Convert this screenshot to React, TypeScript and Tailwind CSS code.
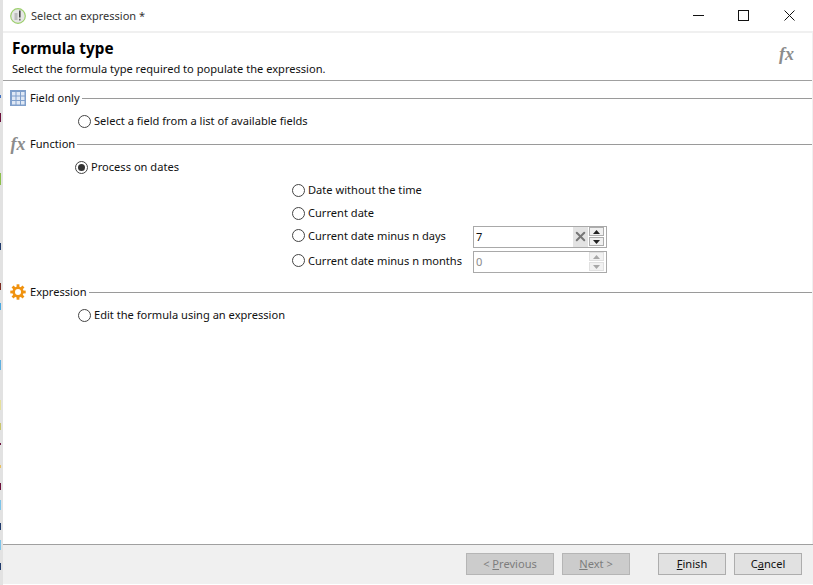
import { X } from "lucide-react";

const font = "font-['Noto_Sans',sans-serif]";

// bits of the windows behind the dialog, showing through at its left edge
const bleed = [
  { top: 95, height: 3, color: "#3f6fc0" },
  { top: 113, height: 9, color: "#6b0f3a" },
  { top: 173, height: 12, color: "#8cbf4a" },
  { top: 243, height: 7, color: "#1f3a6b" },
  { top: 283, height: 7, color: "#7a2a20" },
  { top: 303, height: 7, color: "#4aa8e0" },
  { top: 360, height: 10, color: "#5fb0e0" },
  { top: 400, height: 10, color: "#e6e09a" },
  { top: 423, height: 7, color: "#c9c46a" },
  { top: 443, height: 2, color: "#6b0f3a" },
  { top: 465, height: 3, color: "#e8c060" },
  { top: 483, height: 7, color: "#6b0f3a" },
  { top: 500, height: 10, color: "#7cc4ea" },
  { top: 523, height: 7, color: "#1f3a6b" },
  { top: 540, height: 10, color: "#7cc4ea" },
  { top: 563, height: 7, color: "#1f3a6b" },
];

function Radio({ checked = false }: { checked?: boolean }) {
  return (
    <span className="flex h-[13px] w-[13px] shrink-0 items-center justify-center rounded-full border border-[#444] bg-white">
      {checked && <span className="h-[7px] w-[7px] rounded-full bg-[#333]" />}
    </span>
  );
}

function AppLogo() {
  return (
    <svg width="16" height="16" viewBox="0 0 16 16" className="shrink-0">
      <circle cx="8" cy="8" r="7.3" fill="#e6e6e6" stroke="#9ccf6c" strokeWidth="1.2" />
      <path d="M4.5 5h3v7h-3z" fill="#bdbdbd" />
      <path d="M9 2.5h1.6v7H9z" fill="#444" />
      <path d="M9 10.8h1.6v1.6H9z" fill="#666" />
    </svg>
  );
}

function GridIcon() {
  return (
    <svg width="16" height="16" viewBox="0 0 16 16" className="shrink-0">
      <rect width="16" height="16" fill="#7f9fcb" />
      {[2, 6.5, 11].map((x) =>
        [2, 6.5, 11].map((y) => (
          <rect key={`${x}-${y}`} x={x} y={y} width="3.5" height="3.5" fill="#dfe8f5" />
        ))
      )}
    </svg>
  );
}

function GearIcon() {
  return (
    <svg width="16" height="16" viewBox="0 0 16 16" className="shrink-0">
      <g fill="#f0920f">
        {[0, 45, 90, 135].map((a) => (
          <rect key={a} x="6.6" y="0.3" width="2.8" height="15.4" transform={`rotate(${a} 8 8)`} />
        ))}
      </g>
      <circle cx="8" cy="8" r="5.6" fill="#f0920f" />
      <circle cx="8" cy="8" r="3" fill="#fff" />
    </svg>
  );
}

function Fx({ className }: { className: string }) {
  return (
    <span className={`font-['Liberation_Serif',serif] font-bold italic leading-none text-[#8c8c8c] ${className}`}>
      fx
    </span>
  );
}

function GroupTitle({ icon, label, className = "" }: { icon: React.ReactNode; label: string; className?: string }) {
  return (
    <div className={`flex h-[16px] items-center ${className}`}>
      <span className="flex w-[16px] justify-center">{icon}</span>
      <span className="ml-[4px] text-[#111]">{label}</span>
      <span className="ml-[2px] h-px flex-1 bg-[#9a9a9a]" />
    </div>
  );
}

function Option({ label, checked, className = "" }: { label: string; checked?: boolean; className?: string }) {
  return (
    <div className={`flex h-[16px] items-center gap-[3px] text-[#111] ${className}`}>
      <Radio checked={checked} />
      <span className="whitespace-nowrap">{label}</span>
    </div>
  );
}

function SpinArrows({ disabled = false }: { disabled?: boolean }) {
  const fill = disabled ? "#a8a8a8" : "#222";
  const bg = disabled ? "bg-[#f2f2f2] border-[#e0e0e0]" : "bg-[#f0f0f0] border-[#adadad]";
  return (
    <div className="ml-[1px] flex w-[15px] flex-col gap-px">
      <span className={`flex h-[9px] items-center justify-center border ${bg}`}>
        <svg width="7" height="4" viewBox="0 0 7 4"><path d="M3.5 0 7 4H0z" fill={fill} /></svg>
      </span>
      <span className={`flex h-[9px] items-center justify-center border ${bg}`}>
        <svg width="7" height="4" viewBox="0 0 7 4"><path d="M0 0h7L3.5 4z" fill={fill} /></svg>
      </span>
    </div>
  );
}

function Spinner({ value, disabled = false }: { value: string; disabled?: boolean }) {
  return (
    <div className="flex h-[22px] w-[134px] items-center border border-[#a9a9a9] bg-white py-px pl-[2px] pr-[2px]">
      <span className={`flex-1 ${disabled ? "text-[#8a8a8a]" : "text-[#111]"}`}>{value}</span>
      {!disabled && (
        <span className="flex h-[20px] w-[15px] items-center justify-center bg-[#e3e3e3]">
          <X size={17} strokeWidth={3.2} color="#777" />
        </span>
      )}
      <SpinArrows disabled={disabled} />
    </div>
  );
}

function FooterButton({ children, disabled = false, className = "" }: { children: React.ReactNode; disabled?: boolean; className?: string }) {
  return (
    <div
      className={`flex h-[22px] items-center justify-center border pb-[1px] ${
        disabled ? "border-[#b5b5b5] bg-[#cccccc] text-[#7d7d7d]" : "border-[#adadad] bg-[#e1e1e1] text-[#111]"
      } ${className}`}
    >
      <span>{children}</span>
    </div>
  );
}

export default function App() {
  return (
    <div className={`${font} relative flex h-[585px] w-[813px] flex-col bg-[#f0f0f0] text-[11.1px] leading-none`}>
      <div className="absolute top-0 left-0 h-full w-[3px] bg-[#e2e2e2]">
        {bleed.map((b) => (
          <span
            key={b.top}
            className="absolute left-0 w-px"
            style={{ top: b.top, height: b.height, backgroundColor: b.color }}
          />
        ))}
      </div>

      <div className="flex h-[31px] items-center bg-white pl-[10px]">
        <AppLogo />
        <span className="ml-[5px] text-[11px] text-[#333]">Select an expression *</span>
        <div className="ml-auto mr-[18px] flex items-center">
          <svg width="11" height="11" viewBox="0 0 11 11" className="mr-[34px]">
            <path d="M0 5.5h11" stroke="#111" />
          </svg>
          <svg width="11" height="11" viewBox="0 0 11 11" className="mr-[35px]">
            <rect x="0.5" y="0.5" width="10" height="10" fill="none" stroke="#111" />
          </svg>
          <svg width="11" height="11" viewBox="0 0 11 11">
            <path d="M0.5 0.5l10 10M10.5 0.5l-10 10" stroke="#111" />
          </svg>
        </div>
      </div>

      <div className="mt-[2px] ml-[3px] mr-[1px] flex flex-1 flex-col bg-white">
        <div className="flex h-[48px] items-start justify-between border-b border-[#a0a0a0] pl-[9px] pr-[18px]">
          <div>
            <div className="mt-[7px] text-[15.3px] font-bold leading-[17px] text-black">Formula type</div>
            <div className="mt-[6px] text-[#111]">Select the formula type required to populate the expression.</div>
          </div>
          <Fx className="mt-[12px] text-[18px]" />
        </div>

        <GroupTitle icon={<GridIcon />} label="Field only" className="mt-[9px] ml-[7px]" />
        <Option label="Select a field from a list of available fields" className="mt-[7px] ml-[75px]" />

        <GroupTitle icon={<Fx className="text-[18px]" />} label="Function" className="mt-[7px] ml-[7px]" />
        <Option label="Process on dates" checked className="mt-[7px] ml-[72px]" />

        <div className="mt-[7px] ml-[289px] flex flex-col">
          <Option label="Date without the time" />
          <Option label="Current date" className="mt-[7px]" />
          <div className="mt-[3px] flex h-[25px] items-center">
            <Option label="Current date minus n days" className="mb-[2px] w-[181px]" />
            <Spinner value="7" />
          </div>
          <div className="flex h-[25px] items-center">
            <Option label="Current date minus n months" className="mb-[2px] w-[181px]" />
            <Spinner value="0" disabled />
          </div>
        </div>

        <GroupTitle icon={<GearIcon />} label="Expression" className="mt-[10px] ml-[7px]" />
        <Option label="Edit the formula using an expression" className="mt-[7px] ml-[75px]" />
      </div>

      <div className="flex h-[40px] items-start border-t border-[#a0a0a0] pt-[8px] pr-[11px]">
        <div className="ml-auto flex">
          <FooterButton disabled className="w-[88px]">&lt; <u>P</u>revious</FooterButton>
          <FooterButton disabled className="ml-[8px] w-[68px]"><u>N</u>ext &gt;</FooterButton>
          <FooterButton className="ml-[28px] w-[68px]"><u>F</u>inish</FooterButton>
          <FooterButton className="ml-[8px] w-[68px]">C<u>a</u>ncel</FooterButton>
        </div>
      </div>
      <div className="h-px bg-white" />
    </div>
  );
}
